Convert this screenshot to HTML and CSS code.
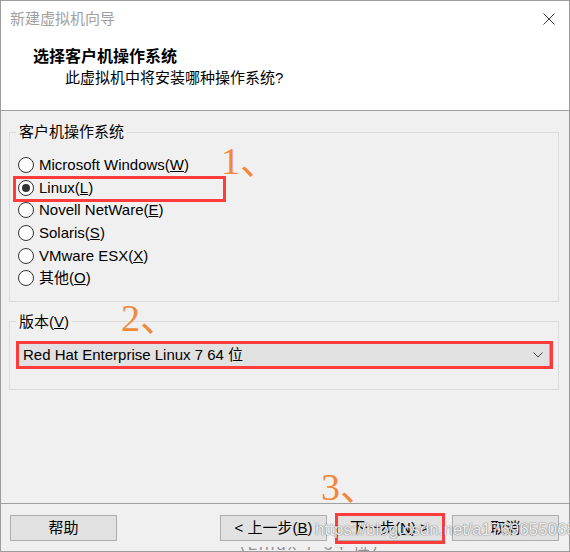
FILE: index.html
```html
<!DOCTYPE html>
<html lang="zh-CN">
<head>
<meta charset="utf-8">
<title>新建虚拟机向导</title>
<link rel="stylesheet" href="styles.css">
</head>
<body>
<div class="window">
  <div class="header">
    <div class="titlebar">
      <span class="title">新建虚拟机向导</span>
      <svg class="close" width="12" height="12" viewBox="0 0 12 12"><path d="M0.5 0.5L11.5 11.5M11.5 0.5L0.5 11.5" stroke="#3c3c3c" stroke-width="1" fill="none"/></svg>
    </div>
    <div class="intro">
      <div class="intro-title">选择客户机操作系统</div>
      <div class="intro-sub">此虚拟机中将安装哪种操作系统?</div>
    </div>
  </div>
  <div class="content">
    <fieldset class="group group-os">
      <legend>客户机操作系统</legend>
      <div class="radio-row"><span class="radio"></span><span>Microsoft Windows(<u>W</u>)</span></div>
      <div class="radio-row"><span class="radio checked"></span><span>Linux(<u>L</u>)</span></div>
      <div class="radio-row"><span class="radio"></span><span>Novell NetWare(<u>E</u>)</span></div>
      <div class="radio-row"><span class="radio"></span><span>Solaris(<u>S</u>)</span></div>
      <div class="radio-row"><span class="radio"></span><span>VMware ESX(<u>X</u>)</span></div>
      <div class="radio-row"><span class="radio"></span><span>其他(<u>O</u>)</span></div>
    </fieldset>
    <fieldset class="group group-version">
      <legend>版本(<u>V</u>)</legend>
      <div class="select">
        <span class="select-text">Red Hat Enterprise Linux 7 64 位</span>
        <svg class="chevron" width="10" height="6" viewBox="0 0 10 6"><path d="M0.5 0.5L5 5L9.5 0.5" stroke="#444" stroke-width="1" fill="none"/></svg>
      </div>
    </fieldset>
  </div>
  <div class="footer">
    <button class="btn">帮助</button>
    <span class="spacer"></span>
    <button class="btn">&lt; 上一步(<u>B</u>)</button>
    <button class="btn btn-gap">下一步(<u>N</u>) &gt;</button>
    <button class="btn btn-gap">取消</button>
  </div>
</div>

<div class="mark mark-linux"></div>
<div class="mark mark-version"></div>
<div class="mark mark-next"></div>
<div class="step step-1">1、</div>
<div class="step step-2">2、</div>
<div class="step step-3">3、</div>
<div class="watermark">https://blog.csdn.net/a1769655068</div>
<div class="under-strip"><span>(Linux 7 64 位)</span></div>
</body>
</html>
```

FILE: styles.css
```css
* { box-sizing: border-box; }
html, body { margin: 0; padding: 0; }
body {
  width: 570px;
  height: 552px;
  position: relative;
  overflow: hidden;
  background: #fff;
  color: #000;
  font-family: "Liberation Sans", "Noto Sans CJK SC", sans-serif;
  font-size: 15px;
}
.window {
  width: 570px;
  height: 552px;
  border: 1px solid #9c9c9c;
  background: #f0f0f0;
  display: flex;
  flex-direction: column;
}
.header {
  flex: none;
  height: 110px;
  background: #fff;
  border-bottom: 1px solid #a0a0a0;
}
.titlebar {
  height: 36px;
  display: flex;
  align-items: center;
  justify-content: space-between;
  padding: 0 14px 0 9px;
}
.title { color: #a0a0a0; line-height: 36px; }
.intro { padding-top: 9px; }
.intro-title {
  padding-left: 32px;
  font-size: 16px;
  font-weight: bold;
  line-height: 22px;
}
.intro-sub {
  padding-left: 64px;
  line-height: 20px;
}
.content {
  padding: 11px 10px 0 8px;
}
.group {
  margin: 0;
  border: 1px solid #dcdcdc;
  min-width: 0;
}
.group legend {
  padding: 0 3px;
  margin-left: -2px;
  line-height: 20px;
}
.group-os { padding: 12px 8px 11px 8px; }
.radio-row {
  height: 22.6px;
  display: flex;
  align-items: center;
  line-height: 20px;
}
.radio {
  width: 16px;
  height: 16px;
  border: 1px solid #333;
  border-radius: 50%;
  background: #fff;
  margin-right: 5px;
  flex: none;
  display: flex;
  align-items: center;
  justify-content: center;
}
.radio.checked::after {
  content: "";
  width: 8px;
  height: 8px;
  border-radius: 50%;
  background: #333;
}
.group-version {
  margin-top: 10px;
  padding: 11px 8px 21px 8px;
}
.select {
  height: 25px;
  background: #e1e1e1;
  border: 1px solid #adadad;
  display: flex;
  align-items: center;
  justify-content: space-between;
  padding: 0 6px 0 4px;
}
.select-text { line-height: 20px; }
.footer {
  margin-top: auto;
  flex: none;
  border-top: 1px solid #a0a0a0;
  padding: 11px 10px 10px 9px;
  display: flex;
}
.spacer { flex: 1; }
.btn {
  width: 107px;
  height: 26px;
  margin: 0;
  padding: 0;
  background: #e1e1e1;
  border: 1px solid #adadad;
  font: inherit;
  color: #000;
  line-height: 20px;
}
.btn-gap { margin-left: 9px; }

.mark {
  position: absolute;
  border: 3px solid #ff3b3b;
}
.mark-linux { left: 13px; top: 176px; width: 213px; height: 26px; }
.mark-version { left: 16px; top: 341px; width: 537px; height: 28px; }
.mark-next { left: 335px; top: 513px; width: 110px; height: 31px; }

.step {
  position: absolute;
  font-family: "Liberation Serif", "Noto Sans CJK SC", serif;
  font-size: 38px;
  line-height: 38px;
  color: #f0873a;
}
.step-1 { left: 221px; top: 142px; }
.step-2 { left: 121px; top: 299px; }
.step-3 { left: 321px; top: 468px; }

.watermark {
  position: absolute;
  left: 315px;
  top: 519px;
  font-family: "Liberation Sans", sans-serif;
  font-size: 17px;
  line-height: 22px;
  color: rgba(255, 255, 255, 0.9);
  text-shadow: 0 0 1px rgba(0, 0, 0, 0.55), 0 0 2px rgba(0, 0, 0, 0.25);
}
.under-strip {
  position: absolute;
  left: 240px;
  top: 547px;
  width: 190px;
  height: 4px;
  overflow: hidden;
}
.under-strip span {
  display: block;
  margin-top: -12px;
  font-size: 17px;
  line-height: 20px;
  letter-spacing: 2px;
  color: rgba(80, 80, 80, 0.6);
}
```
